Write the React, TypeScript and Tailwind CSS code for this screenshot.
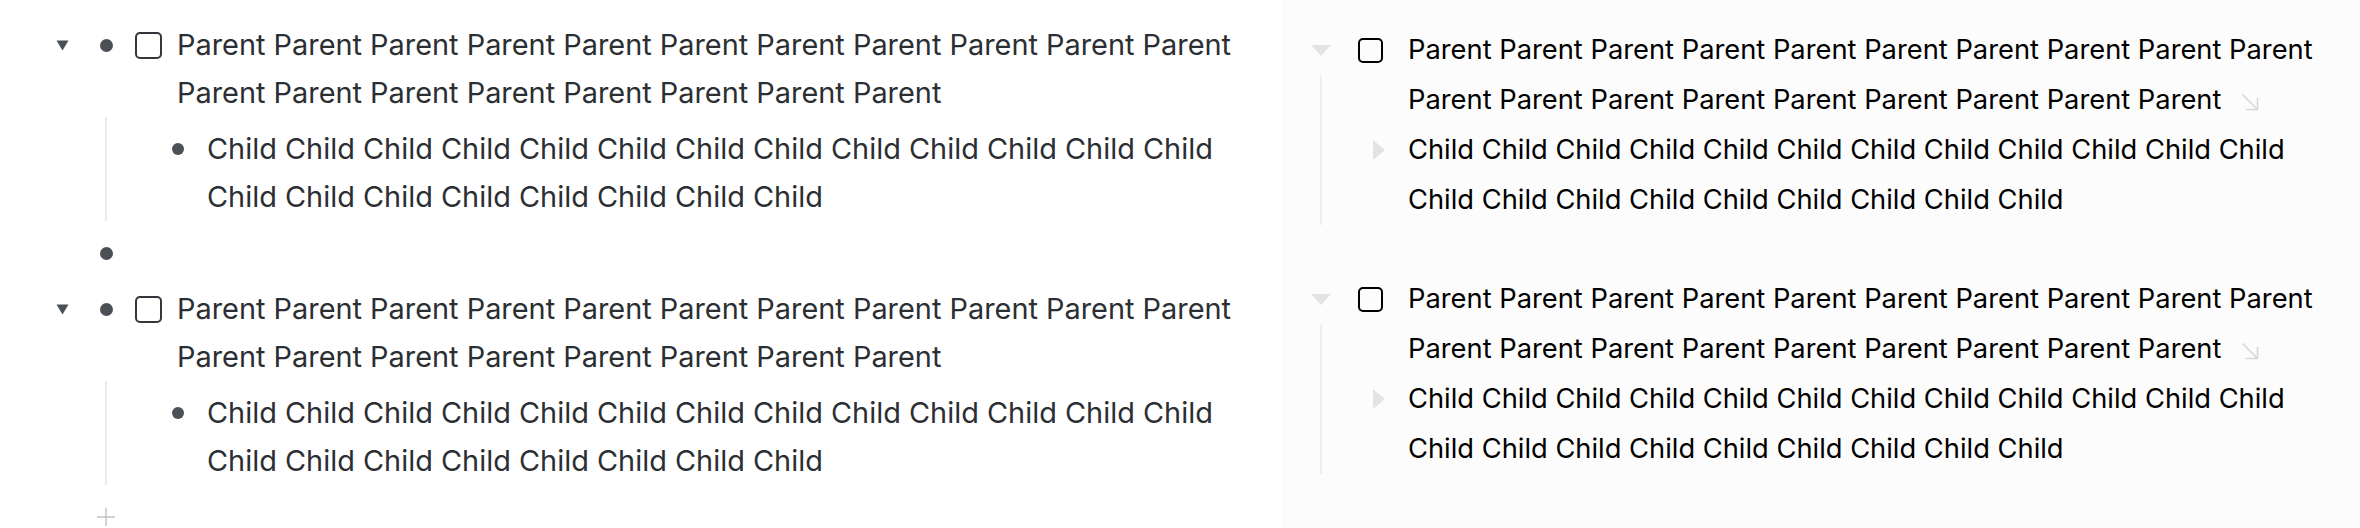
import React from 'react'

const PARENT = Array(19).fill('Parent').join(' ')
const CHILD = Array(21).fill('Child').join(' ')

const leftFont = { fontFamily: 'Inter, "Noto Sans", sans-serif' }

function Caret() {
  return (
    <svg width="13" height="11" viewBox="0 0 13 11" aria-hidden="true">
      <path d="M0.5 0.5h12L6.5 10.5z" fill="#4b5057" />
    </svg>
  )
}

function Plus() {
  return (
    <svg width="18" height="18" viewBox="0 0 18 18" aria-hidden="true">
      <path d="M9 0v18M0 9h18" stroke="#c4c4c4" strokeWidth="1.5" />
    </svg>
  )
}

function Dot({ size = 13 }: { size?: number }) {
  return <span className="block rounded-full bg-[#4b5057]" style={{ width: size, height: size }} />
}

// left: bullet outliner
function LeftRow({
  caret,
  bullet,
  checkbox,
  text,
  last,
}: {
  caret?: boolean
  bullet: React.ReactNode
  checkbox?: boolean
  text?: string
  last?: boolean
}) {
  return (
    <div className={last ? 'flex pt-[4px]' : 'flex py-[4px]'}>
      <div className="flex h-[48px] w-[30px] flex-none items-center justify-center">{caret && <Caret />}</div>
      <div className="flex h-[48px] w-[58px] flex-none items-center justify-center">{bullet}</div>
      {checkbox && (
        <div className="flex h-[48px] flex-none items-center pr-[15px]">
          <span className="block h-[27px] w-[27px] rounded-[5px] border-[2.5px] border-[#33373c]" />
        </div>
      )}
      {text !== undefined && <p className="min-w-0 flex-1 text-[28.9px] leading-[48px] text-[#2b2f33]">{text}</p>}
    </div>
  )
}

function LeftBlock() {
  return (
    <div>
      <LeftRow caret bullet={<Dot />} checkbox text={PARENT} />
      <div className="-mt-[4px] mb-[4px] ml-[58px] border-l-2 border-[#ebebeb] pl-[12px] pt-[4px]">
        <LeftRow bullet={<Dot size={12} />} text={CHILD} last />
      </div>
    </div>
  )
}

function DownTri() {
  return (
    <svg width="20" height="11" viewBox="0 0 20 11" aria-hidden="true">
      <path d="M0 0h20L10 11z" fill="#e3e3e3" />
    </svg>
  )
}

function RightTri() {
  return (
    <svg width="12" height="20" viewBox="0 0 12 20" aria-hidden="true">
      <path d="M0 0L12 10L0 20z" fill="#e3e3e3" />
    </svg>
  )
}

function Arrow() {
  return (
    <svg width="18" height="18" viewBox="0 0 18 18" className="ml-[20px] inline-block align-[-2px]" aria-hidden="true">
      <path d="M1.5 1.5L16.5 16.5M16.5 5v11.5H5" fill="none" stroke="#d6d6d6" strokeWidth="1.6" />
    </svg>
  )
}

// right: toggle list
function RightBlock() {
  return (
    <div className="flex">
      <div className="flex w-[40px] flex-none flex-col items-center">
        <div className="flex h-[50px] items-center">
          <DownTri />
        </div>
        <div className="w-[2px] flex-1 bg-[#efefef]" />
      </div>
      <div className="grid min-w-0 flex-1 grid-cols-[67px_1fr] text-[27.3px] leading-[50px] text-black">
        <div className="flex h-[50px] items-center pl-[17px]">
          <span className="block h-[25px] w-[25px] rounded-[5px] border-[2.5px] border-black" />
        </div>
        <p>
          {PARENT}
          <Arrow />
        </p>
        <div className="flex h-[50px] items-center pl-[32px]">
          <RightTri />
        </div>
        <p>{CHILD}</p>
      </div>
    </div>
  )
}

export default function App() {
  return (
    <div className="flex h-[528px] w-[2360px] overflow-hidden bg-white" style={leftFont}>
      <div className="w-[1282px] flex-none pl-[47px] pr-[24px] pt-[17px]">
        <LeftBlock />
        <LeftRow bullet={<Dot />} />
        <LeftBlock />
        <LeftRow bullet={<Plus />} />
      </div>
      <div className="min-w-0 flex-1 bg-[#fcfcfc] pl-[19px] pr-[30px] pt-[25px]">
        <RightBlock />
        <div className="h-[49px]" />
        <RightBlock />
      </div>
    </div>
  )
}
